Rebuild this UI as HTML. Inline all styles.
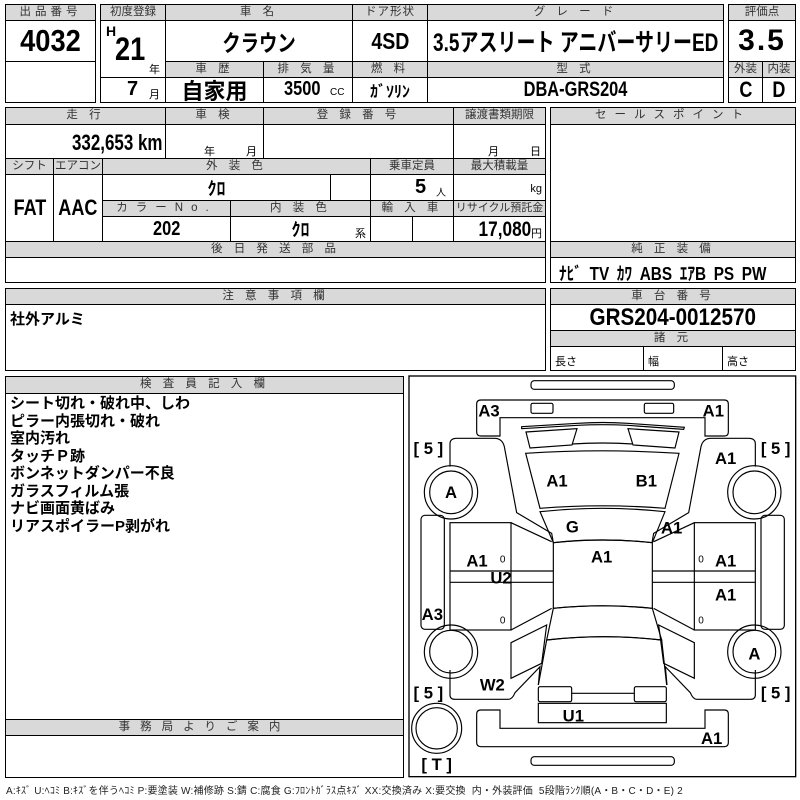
<!DOCTYPE html>
<html><head><meta charset="utf-8"><style>
*{margin:0;padding:0;box-sizing:border-box}
body{width:800px;height:800px;background:#fff;position:relative;overflow:hidden;font-family:"Liberation Sans","Noto Sans CJK JP",sans-serif;color:#000}
.c{position:absolute;border:1px solid #000;background:#fff;overflow:hidden}
.h{position:absolute;border:1px solid #000;background:#d9d9d9;font-size:11.5px;color:#333;text-align:center;line-height:14px;letter-spacing:4px;white-space:nowrap;overflow:hidden}
.b{font-family:"Liberation Sans","Noto Sans CJK JP",sans-serif;font-weight:bold;white-space:nowrap}
.ctr{display:flex;align-items:center;justify-content:center}
.t{position:absolute;white-space:nowrap}
.n{display:inline-block;transform:scaleX(0.82)}
</style></head><body>

<div class="h" style="left:5px;top:4px;width:91px;height:17px">出品番号</div>
<div class="c ctr b" style="left:5px;top:20px;width:91px;height:42px;font-size:31px"><span class="n" style="transform:scaleX(0.88)">4032</span></div>
<div class="c" style="left:5px;top:61px;width:91px;height:42px"></div>

<div class="h" style="left:100px;top:4px;width:66px;height:17px;letter-spacing:0">初度登録</div>
<div class="h" style="left:165px;top:4px;width:188px;height:17px">車 名</div>
<div class="h" style="left:352px;top:4px;width:76px;height:17px;letter-spacing:1px">ドア形状</div>
<div class="h" style="left:427px;top:4px;width:297px;height:17px">グ レ ー ド</div>
<div class="c" style="left:100px;top:20px;width:66px;height:58px">
 <span class="t b" style="left:5px;top:2px;font-size:14px">H</span>
 <span class="t b" style="left:14px;top:10px;font-size:32px"><span class="n" style="transform:scaleX(0.85);transform-origin:left">21</span></span>
 <span class="t" style="left:48px;top:40px;font-size:11px">年</span>
</div>
<div class="c ctr b" style="left:165px;top:20px;width:188px;height:42px;font-size:23px"><span class="n" style="transform:scaleX(0.8)">クラウン</span></div>
<div class="c ctr b" style="left:352px;top:20px;width:76px;height:42px;font-size:23px"><span class="n" style="transform:scaleX(0.85)">4SD</span></div>
<div class="c ctr b" style="left:427px;top:20px;width:297px;height:42px;font-size:25px"><span style="display:inline-block;transform:scaleX(0.76);letter-spacing:0">3.5アスリート アニバーサリーED</span></div>
<div class="h" style="left:165px;top:61px;width:99px;height:17px">車 歴</div>
<div class="h" style="left:263px;top:61px;width:90px;height:17px">排 気 量</div>
<div class="h" style="left:352px;top:61px;width:76px;height:17px">燃 料</div>
<div class="h" style="left:427px;top:61px;width:297px;height:17px">型 式</div>
<div class="c" style="left:100px;top:77px;width:66px;height:26px"><span class="t b" style="left:26px;top:0px;font-size:20px">7</span><span class="t" style="left:48px;top:8px;font-size:11px">月</span></div>
<div class="c ctr b" style="left:165px;top:77px;width:99px;height:26px;font-size:22px">自家用</div>
<div class="c" style="left:263px;top:77px;width:90px;height:26px"><span class="t b" style="left:20px;top:0px;font-size:20px"><span class="n" style="transform-origin:left">3500</span></span><span class="t" style="left:66px;top:9px;font-size:10px">CC</span></div>
<div class="c ctr b" style="left:352px;top:77px;width:76px;height:26px;font-size:16px">ｶﾞｿﾘﾝ</div>
<div class="c ctr b" style="left:427px;top:77px;width:297px;height:26px;font-size:21px"><span class="n" style="transform:scaleX(0.78)">DBA-GRS204</span></div>

<div class="h" style="left:728px;top:4px;width:68px;height:17px;letter-spacing:0">評価点</div>
<div class="c ctr b" style="left:728px;top:20px;width:68px;height:42px;font-size:30px;letter-spacing:2px">3.5</div>
<div class="h" style="left:728px;top:61px;width:35px;height:17px;letter-spacing:0">外装</div>
<div class="h" style="left:762px;top:61px;width:34px;height:17px;letter-spacing:0">内装</div>
<div class="c ctr b" style="left:728px;top:77px;width:35px;height:26px;font-size:22px"><span class="n">C</span></div>
<div class="c ctr b" style="left:762px;top:77px;width:34px;height:26px;font-size:22px"><span class="n">D</span></div>

<div class="h" style="left:5px;top:107px;width:161px;height:18px">走 行</div>
<div class="h" style="left:165px;top:107px;width:99px;height:18px">車 検</div>
<div class="h" style="left:263px;top:107px;width:191px;height:18px">登 録 番 号</div>
<div class="h" style="left:453px;top:107px;width:93px;height:18px;letter-spacing:0">譲渡書類期限</div>
<div class="c" style="left:5px;top:124px;width:161px;height:35px"><span class="t b" style="right:3px;top:5px;font-size:22px"><span class="n" style="transform:scaleX(0.77);transform-origin:right">332,653 km</span></span></div>
<div class="c" style="left:165px;top:124px;width:99px;height:35px"><span class="t" style="left:38px;top:18px;font-size:11px">年</span><span class="t" style="left:80px;top:18px;font-size:11px">月</span></div>
<div class="c" style="left:263px;top:124px;width:191px;height:35px"></div>
<div class="c" style="left:453px;top:124px;width:93px;height:35px"><span class="t" style="left:34px;top:18px;font-size:11px">月</span><span class="t" style="left:76px;top:18px;font-size:11px">日</span></div>
<div class="h" style="left:5px;top:158px;width:49px;height:17px;letter-spacing:0">シフト</div>
<div class="h" style="left:53px;top:158px;width:50px;height:17px;letter-spacing:0">エアコン</div>
<div class="h" style="left:102px;top:158px;width:269px;height:17px">外 装 色</div>
<div class="h" style="left:370px;top:158px;width:84px;height:17px;letter-spacing:0">乗車定員</div>
<div class="h" style="left:453px;top:158px;width:93px;height:17px;letter-spacing:0">最大積載量</div>
<div class="c ctr b" style="left:5px;top:174px;width:49px;height:68px;font-size:22px"><span class="n">FAT</span></div>
<div class="c ctr b" style="left:53px;top:174px;width:50px;height:68px;font-size:22px"><span class="n">AAC</span></div>
<div class="c ctr b" style="left:102px;top:174px;width:229px;height:27px;font-size:18px">ｸﾛ</div>
<div class="c" style="left:330px;top:174px;width:41px;height:27px"></div>
<div class="c" style="left:370px;top:174px;width:84px;height:27px"><span class="t b" style="left:44px;top:1px;font-size:20px">5</span><span class="t" style="left:65px;top:9px;font-size:10px">人</span></div>
<div class="c" style="left:453px;top:174px;width:93px;height:27px"><span class="t" style="right:3px;top:8px;font-size:11px">kg</span></div>
<div class="h" style="left:102px;top:200px;width:129px;height:17px;letter-spacing:8px">カラーNo.</div>
<div class="h" style="left:230px;top:200px;width:141px;height:17px">内 装 色</div>
<div class="h" style="left:370px;top:200px;width:84px;height:17px">輸 入 車</div>
<div class="h" style="left:453px;top:200px;width:93px;height:17px;letter-spacing:0;font-size:11px">リサイクル預託金</div>
<div class="c ctr b" style="left:102px;top:216px;width:129px;height:26px;font-size:20px"><span class="n">202</span></div>
<div class="c ctr b" style="left:230px;top:216px;width:141px;height:26px;font-size:18px">ｸﾛ<span class="t" style="right:4px;top:8px;font-size:11px;font-weight:normal">系</span></div>
<div class="c" style="left:370px;top:216px;width:43px;height:26px"></div>
<div class="c" style="left:412px;top:216px;width:42px;height:26px"></div>
<div class="c" style="left:453px;top:216px;width:93px;height:26px"><span class="t b" style="right:14px;top:1px;font-size:21px"><span class="n" style="transform-origin:right">17,080</span></span><span class="t" style="right:3px;top:8px;font-size:11px">円</span></div>
<div class="h" style="left:5px;top:241px;width:541px;height:17px">後 日 発 送 部 品</div>
<div class="c" style="left:5px;top:257px;width:541px;height:26px"></div>
<div class="h" style="left:550px;top:107px;width:246px;height:18px;letter-spacing:8px">セールスポイント</div>
<div class="c" style="left:550px;top:124px;width:246px;height:118px"></div>
<div class="h" style="left:550px;top:241px;width:246px;height:17px">純 正 装 備</div>
<div class="c b" style="left:550px;top:257px;width:246px;height:26px;font-size:18px;padding:2px 0 0 8px;word-spacing:4px"><span class="n" style="transform-origin:left;transform:scaleX(0.85)">ﾅﾋﾞ TV ｶﾜ ABS ｴｱB PS PW</span></div>

<div class="h" style="left:5px;top:288px;width:541px;height:17px">注 意 事 項 欄</div>
<div class="c b" style="left:5px;top:304px;width:541px;height:67px;font-size:15px;padding:3px 0 0 4px">社外アルミ</div>
<div class="h" style="left:550px;top:288px;width:246px;height:17px">車 台 番 号</div>
<div class="c ctr b" style="left:550px;top:304px;width:246px;height:27px;font-size:24px"><span class="n" style="transform:scaleX(0.86)">GRS204-0012570</span></div>
<div class="h" style="left:550px;top:330px;width:246px;height:17px">諸 元</div>
<div class="c" style="left:550px;top:346px;width:94px;height:25px;font-size:11px;padding:6px 0 0 4px">長さ</div>
<div class="c" style="left:643px;top:346px;width:80px;height:25px;font-size:11px;padding:6px 0 0 4px">幅</div>
<div class="c" style="left:722px;top:346px;width:74px;height:25px;font-size:11px;padding:6px 0 0 4px">高さ</div>

<div class="h" style="left:5px;top:376px;width:399px;height:18px">検 査 員 記 入 欄</div>
<div class="c b" style="left:5px;top:393px;width:399px;height:327px;font-size:15px;line-height:17.5px;padding:1px 0 0 4px">シート切れ・破れ中、しわ<br>ピラー内張切れ・破れ<br>室内汚れ<br>タッチＰ跡<br>ボンネットダンパー不良<br>ガラスフィルム張<br>ナビ画面黄ばみ<br>リアスポイラーP剥がれ</div>
<div class="h" style="left:5px;top:719px;width:399px;height:17px;letter-spacing:10px">事務局よりご案内</div>
<div class="c" style="left:5px;top:735px;width:399px;height:43px"></div>

<svg style="position:absolute;left:405px;top:370px" width="395" height="430" viewBox="0 0 1185 1290">
<g fill="none" stroke="#000" stroke-width="3.5">
<rect x="12" y="18" width="1160" height="1202" stroke-width="4"/>
<rect x="378" y="32" width="430" height="26" rx="10"/>
<rect x="378" y="1160" width="430" height="26" rx="10"/>
<path d="M228,90 H958 Q970,90 970,102 V186 Q970,198 958,198 H900 V143 H285 V198 H228 Q215,198 215,186 V102 Q215,90 228,90Z"/>
<path d="M228,1130 H958 Q970,1130 970,1118 V1032 Q970,1020 958,1020 H900 V1075 H285 V1020 H228 Q215,1020 215,1032 V1118 Q215,1130 228,1130Z"/>
<rect x="378" y="100" width="66" height="30" rx="5"/>
<rect x="718" y="100" width="88" height="30" rx="5"/>
<path d="M350,170 L518,160 Q593,155 668,160 L838,172 L836,178 L668,166 Q593,162 518,166 L350,176Z"/>
<path d="M363,186 L516,176 L501,225 L375,234Z"/>
<path d="M822,186 L669,176 L684,225 L810,234Z"/>
<path d="M501,222 Q593,216 684,222"/>
<path d="M362,250 Q593,235 822,250 L780,415 Q593,400 405,415Z"/>
<path d="M405,425 Q593,405 780,425 L742,518 Q593,502 445,518Z"/>
<path d="M445,518 Q593,502 742,518 V715 Q593,700 445,715Z"/>
<path d="M445,715 Q593,700 742,715 L770,810 Q593,790 425,810Z"/>
<path d="M425,810 Q593,790 770,810 L785,945 M425,810 L400,945"/>
<rect x="400" y="950" width="100" height="45" rx="5"/>
<rect x="688" y="950" width="96" height="45" rx="5"/>
<path d="M500,970 H688"/>
<rect x="400" y="1000" width="384" height="58"/>
<g id="side">
<rect x="48" y="436" width="70" height="342" rx="12"/>
<path d="M135,290 V222 Q135,205 155,205 H268 Q292,205 298,230 L335,428 L440,490 L445,518"/>
<rect x="135" y="458" width="183" height="322"/>
<path d="M135,603 H445 M135,637 H445"/>
<path d="M318,458 L440,515 M318,780 L440,715"/>
<path d="M318,818 L425,765 L410,880 L318,925Z"/>
<path d="M135,900 V975 Q135,988 150,988 H310 Q322,988 330,968 L405,890 L400,945"/>
<circle cx="138" cy="367" r="80"/><circle cx="138" cy="367" r="64"/>
<circle cx="138" cy="845" r="80"/><circle cx="138" cy="845" r="64"/>
</g>
<use href="#side" transform="translate(1186,0) scale(-1,1)"/>
<circle cx="95" cy="1075" r="75"/><circle cx="95" cy="1075" r="62"/>
</g>
<g font-family="Liberation Sans, sans-serif" font-weight="bold" font-size="50" text-anchor="middle" fill="#000">
<text x="252" y="140">A3</text><text x="925" y="140">A1</text>
<text x="962" y="282">A1</text><text x="138" y="384">A</text>
<text x="456" y="350">A1</text><text x="724" y="350">B1</text>
<text x="502" y="487">G</text><text x="800" y="490">A1</text>
<text x="590" y="578">A1</text><text x="216" y="590">A1</text>
<text x="288" y="640">U2</text><text x="962" y="590">A1</text>
<text x="962" y="692">A1</text><text x="82" y="750">A3</text>
<text x="1048" y="868">A</text><text x="262" y="962">W2</text>
<text x="505" y="1055">U1</text><text x="920" y="1122">A1</text>
<text x="70" y="252">[ 5 ]</text><text x="1112" y="252">[ 5 ]</text>
<text x="70" y="985">[ 5 ]</text><text x="1112" y="985">[ 5 ]</text>
<text x="95" y="1200">[ T ]</text>
<g font-size="30" font-weight="normal"><text x="293" y="578">0</text><text x="293" y="760">0</text><text x="888" y="578">0</text><text x="888" y="760">0</text></g>
</g>
</svg>

<div class="t" style="left:6px;top:782px;font-size:10px;color:#222;letter-spacing:0.2px">A:ｷｽﾞ U:ﾍｺﾐ B:ｷｽﾞを伴うﾍｺﾐ P:要塗装 W:補修跡 S:錆 C:腐食 G:ﾌﾛﾝﾄｶﾞﾗｽ点ｷｽﾞ XX:交換済み X:要交換 &nbsp;内・外装評価 &nbsp;5段階ﾗﾝｸ順(A・B・C・D・E) 2</div>
</body></html>
